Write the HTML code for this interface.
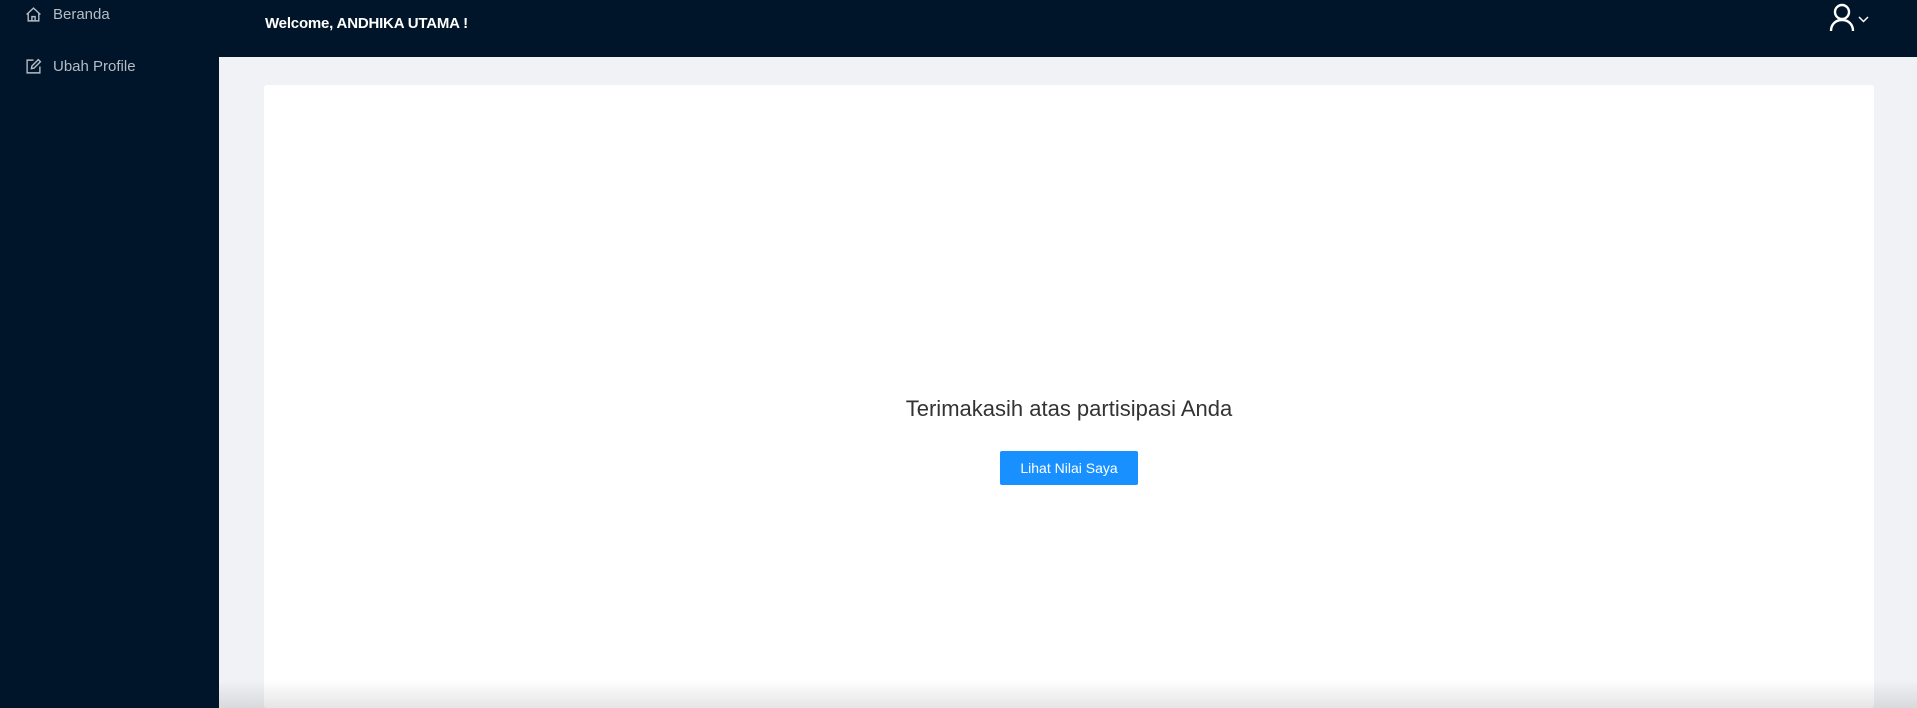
<!DOCTYPE html>
<html><head><meta charset="utf-8"><style>
*{margin:0;padding:0;box-sizing:border-box}
body{width:1917px;height:708px;overflow:hidden;background:#f0f2f5;font-family:"Liberation Sans",sans-serif;position:relative}
.side{position:absolute;left:0;top:0;width:219px;height:708px;background:#001529}
.hdr{position:absolute;left:219px;top:0;width:1698px;height:57px;background:#001529}
.item{position:absolute;left:25px;color:#b5bcc6;font-size:15px;display:flex;align-items:center}
.item svg{margin-right:11px}
.wel{position:absolute;left:265px;top:15px;color:#fff;font-size:15px;font-weight:bold;letter-spacing:-0.2px}
.card{position:absolute;left:264px;top:85px;width:1610px;height:623px;background:#fff;border-radius:3px}
.msg{position:absolute;left:0;width:1610px;top:311px;text-align:center;font-size:22px;color:#333}
.btn{position:absolute;left:1000px;top:451px;width:138px;height:34px;background:#1890ff;color:#fff;font-size:14px;border-radius:2px;display:flex;align-items:center;justify-content:center}
.fade{position:absolute;left:219px;top:680px;width:1698px;height:28px;background:linear-gradient(rgba(0,0,0,0),rgba(0,0,0,0.1))}
</style></head><body>
<div class="side">
<div class="item" style="top:6px"><svg width="17" height="17" viewBox="0 0 16 16" fill="none" stroke="#b5bcc6" stroke-width="1.3"><path d="M1.5 8 8 2l6.5 6M3 7v7h10V7M6.5 14v-4h3v4"/></svg>Beranda</div>
<div class="item" style="top:58px"><svg width="17" height="17" viewBox="0 0 16 16" fill="none" stroke="#b5bcc6" stroke-width="1.3"><path d="M8 2H2v12h12V8"/><path d="M6 10l.5-2.5L12.5 1.5l2 2-6 6z"/></svg>Ubah Profile</div>
</div>
<div class="hdr"></div>
<div class="wel">Welcome, ANDHIKA UTAMA !</div>
<svg style="position:absolute;left:1828px;top:2px" width="46" height="30" viewBox="0 0 46 30" fill="none" stroke="#fff" stroke-width="2.4"><circle cx="14" cy="10" r="7"/><path d="M3 29c0-7 5-11 11-11s11 4 11 11"/><path d="M31 15l4.5 4.5L40 15" stroke-width="1.5"/></svg>
<div class="card">
<div class="msg">Terimakasih atas partisipasi Anda</div>
</div>
<div class="btn">Lihat Nilai Saya</div>
<div class="fade"></div>
</body></html>
